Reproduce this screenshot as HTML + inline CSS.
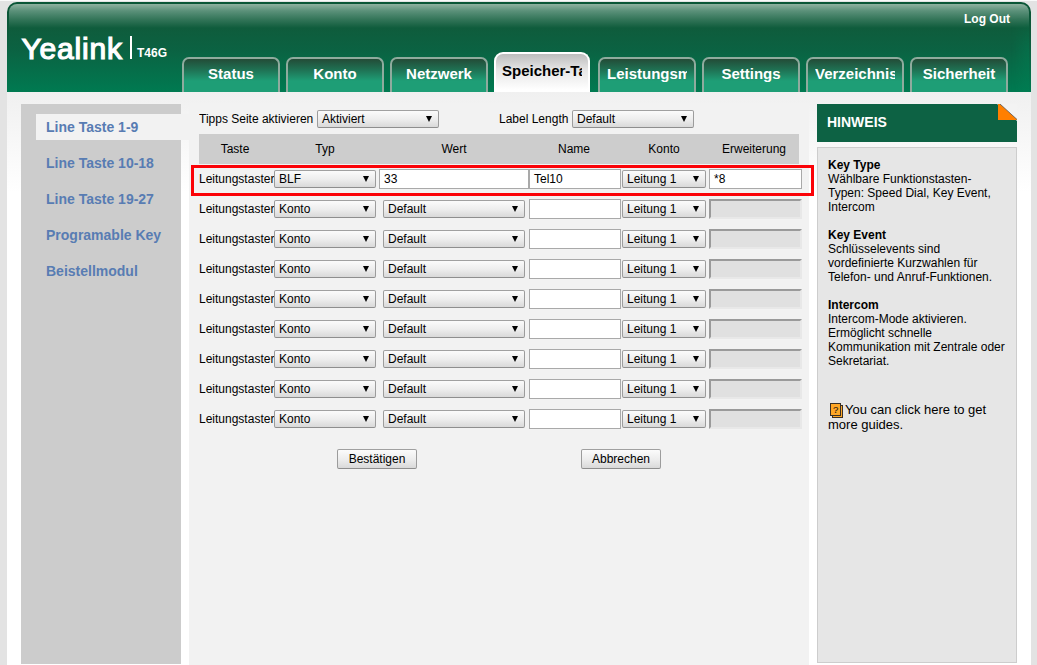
<!DOCTYPE html>
<html lang="de"><head><meta charset="utf-8"><title>Yealink T46G</title>
<style>
html,body{margin:0;padding:0}
body{width:1037px;height:665px;overflow:hidden;background:#e3e3e3;font-family:"Liberation Sans",Arial,sans-serif;font-size:12px;color:#000;position:relative}
div,span,i{box-sizing:border-box}
.abs,.tab,.lbl,.sel,.inp,.dis,.btn,.th,.side a,.hl{position:absolute}
#topline{left:0;top:0;width:1037px;height:1px;background:#fafafa}
#wrap{left:7px;top:92px;width:1024px;height:573px;background:linear-gradient(to bottom,#f0f0f0 0,#ffffff 100px)}
#hdr{left:7px;top:2px;width:1024px;height:90px;border-radius:10px 10px 0 0;background:linear-gradient(to bottom,#0a5536 0,#0c593a 29px,#0b6242 47px,#007a51 90px)}
#hdr2{left:9px;top:4px;width:1020px;height:88px;border-radius:8px 8px 0 0;background:linear-gradient(to bottom,#8fb1a0 0,#5a9079 7px,#35765a 15px,#0f5c3c 24px,#0b6242 45px,#007a51 88px)}
#hdr3{left:1011px;top:18px;width:18px;height:74px;background:linear-gradient(to right,rgba(0,128,84,0),rgba(0,128,84,0.4));-webkit-mask-image:linear-gradient(to bottom,transparent 0,#000 30px);mask-image:linear-gradient(to bottom,transparent 0,#000 30px)}
#logo{left:21.5px;top:30.5px;font-size:30px;line-height:36px;color:#fff;letter-spacing:0.8px;-webkit-text-stroke:1.2px #fff}
#bar{left:130px;top:36px;width:2px;height:23px;background:#fff}
#model{left:137px;top:45px;font-size:12px;line-height:16px;font-weight:bold;color:#fff}
#logout{left:964px;top:12px;font-size:12px;line-height:14px;font-weight:bold;color:#fff}
.tab{top:57px;width:98px;height:35px;border:2px solid #8fab9e;border-bottom:none;border-radius:7px 7px 0 0;background:linear-gradient(to bottom,#234b37 0,#1f6e51 10px,#1e9e76 22px);color:#fff;font-size:15px;font-weight:bold;padding:0 7px}
.tab span{display:block;width:80px;overflow:hidden;white-space:nowrap;text-align:center;line-height:17px;margin-top:6px}
.tab.act{top:52px;width:96px;height:40px;border:2px solid #fff;border-bottom:none;border-radius:9px 9px 0 0;background:linear-gradient(to bottom,#bdbdbd 0,#e6e6e6 16px,#ffffff 36px);color:#000;padding:0 6px}
.tab.act span{margin-top:8px}
#side{left:21px;top:104px;width:160px;height:560px;background:#cccccc}
#sideact{left:36px;top:114px;width:153px;height:26px;background:#f2f2f2}
.side a{left:46px;font-size:14px;line-height:18px;font-weight:bold;color:#587cb3;white-space:nowrap;text-decoration:none}
#main{left:189px;top:104px;width:620px;height:561px;background:#f2f2f2}
#thead{left:199px;top:134px;width:600px;height:30px;background:#cdcdcd}
.th{top:140px;width:100px;text-align:center;line-height:18px}
.hl{left:191px;top:165px;width:623px;height:31px;border:3px solid #fb0207}
.lbl{left:199px;width:75px;overflow:hidden;white-space:nowrap;line-height:18px;height:18px}
.sel{height:18px;line-height:16px;border:1px solid;border-color:#a0a0a0 #9c9c9c #8e8e8e #9c9c9c;border-radius:2px;background:linear-gradient(to bottom,#fbfbfb,#ececec 55%,#d9d9d9);padding-left:4px;white-space:nowrap;overflow:hidden}
.sel i{position:absolute;right:6px;top:5px;width:0;height:0;border-left:3px solid transparent;border-right:3px solid transparent;border-top:6px solid #000}
.inp{height:20px;border:1px solid #a9a9a9;background:#fff;line-height:18px;padding-left:4px;white-space:nowrap;overflow:hidden}
.dis{height:20px;border:2px solid;border-color:#9a9a9a #e8e8e8 #e8e8e8 #9a9a9a;background:#e0e0e0}
.btn{top:449px;width:80px;height:20px;border:1px solid;border-color:#a0a0a0 #9c9c9c #8e8e8e #9c9c9c;border-radius:2px;background:linear-gradient(to bottom,#fbfbfb,#ececec 55%,#d9d9d9);text-align:center;line-height:18px}
#hinthead{left:817px;top:104px;width:200px;height:38px;background:#0d6244;color:#fff;font-size:14px;font-weight:bold;line-height:36px;padding-left:10px}
#hintbody{left:817px;top:147px;width:200px;height:516px;background:#e6e6e6;border:1px solid #cdcdcd}
#hinttxt{left:828px;top:158px;width:185px;line-height:14px}
#hinttxt b{display:block}
#guide{left:828px;top:402px;width:185px;font-size:13px;line-height:15px}
</style></head><body>
<div class="abs" id="topline"></div>
<div class="abs" id="wrap"></div>
<div class="abs" id="hdr"></div>
<div class="abs" id="hdr2"></div>
<div class="abs" id="hdr3"></div>
<div class="abs" id="logo">Yealink</div>
<div class="abs" id="bar"></div>
<div class="abs" id="model">T46G</div>
<div class="abs" id="logout">Log Out</div>
<div class="tab" style="left:182px"><span>Status</span></div>
<div class="tab" style="left:286px"><span>Konto</span></div>
<div class="tab" style="left:390px"><span>Netzwerk</span></div>
<div class="tab act" style="left:494px"><span>Speicher-Taste</span></div>
<div class="tab" style="left:598px"><span>Leistungsmerkmale</span></div>
<div class="tab" style="left:702px"><span>Settings</span></div>
<div class="tab" style="left:806px"><span>Verzeichnis</span></div>
<div class="tab" style="left:910px"><span>Sicherheit</span></div>

<div class="abs" id="side"></div>
<div class="abs" id="main"></div>
<div class="abs" id="sideact"></div>
<div class="side">
<a style="top:118px">Line Taste 1-9</a>
<a style="top:154px">Line Taste 10-18</a>
<a style="top:190px">Line Taste 19-27</a>
<a style="top:226px">Programable Key</a>
<a style="top:262px">Beistellmodul</a>
</div>
<div class="lbl" style="top:110px;width:120px">Tipps Seite aktivieren</div>
<div class="sel" style="left:317px;top:110px;width:122px">Aktiviert<i></i></div>
<div class="lbl" style="left:499px;top:110px;width:72px">Label Length</div>
<div class="sel" style="left:572px;top:110px;width:122px">Default<i></i></div>
<div class="abs" id="thead"></div>
<div class="th" style="left:185px">Taste</div>
<div class="th" style="left:275px">Typ</div>
<div class="th" style="left:404px">Wert</div>
<div class="th" style="left:524px">Name</div>
<div class="th" style="left:614px">Konto</div>
<div class="th" style="left:704px">Erweiterung</div>
<div class="lbl" style="top:170px">Leitungstaster</div>
<div class="sel" style="left:274px;top:170px;width:102px">BLF<i></i></div>
<div class="inp" style="left:379px;top:169px;width:150px">33</div>
<div class="inp" style="left:529px;top:169px;width:92px">Tel10</div>
<div class="sel" style="left:622px;top:170px;width:84px">Leitung 1<i></i></div>
<div class="inp" style="left:709px;top:169px;width:93px">*8</div>
<div class="lbl" style="top:200px">Leitungstaster</div>
<div class="sel" style="left:274px;top:200px;width:102px">Konto<i></i></div>
<div class="sel" style="left:383px;top:200px;width:142px">Default<i></i></div>
<div class="inp" style="left:529px;top:199px;width:92px"></div>
<div class="sel" style="left:622px;top:200px;width:84px">Leitung 1<i></i></div>
<div class="dis" style="left:709px;top:199px;width:93px"></div>
<div class="lbl" style="top:230px">Leitungstaster</div>
<div class="sel" style="left:274px;top:230px;width:102px">Konto<i></i></div>
<div class="sel" style="left:383px;top:230px;width:142px">Default<i></i></div>
<div class="inp" style="left:529px;top:229px;width:92px"></div>
<div class="sel" style="left:622px;top:230px;width:84px">Leitung 1<i></i></div>
<div class="dis" style="left:709px;top:229px;width:93px"></div>
<div class="lbl" style="top:260px">Leitungstaster</div>
<div class="sel" style="left:274px;top:260px;width:102px">Konto<i></i></div>
<div class="sel" style="left:383px;top:260px;width:142px">Default<i></i></div>
<div class="inp" style="left:529px;top:259px;width:92px"></div>
<div class="sel" style="left:622px;top:260px;width:84px">Leitung 1<i></i></div>
<div class="dis" style="left:709px;top:259px;width:93px"></div>
<div class="lbl" style="top:290px">Leitungstaster</div>
<div class="sel" style="left:274px;top:290px;width:102px">Konto<i></i></div>
<div class="sel" style="left:383px;top:290px;width:142px">Default<i></i></div>
<div class="inp" style="left:529px;top:289px;width:92px"></div>
<div class="sel" style="left:622px;top:290px;width:84px">Leitung 1<i></i></div>
<div class="dis" style="left:709px;top:289px;width:93px"></div>
<div class="lbl" style="top:320px">Leitungstaster</div>
<div class="sel" style="left:274px;top:320px;width:102px">Konto<i></i></div>
<div class="sel" style="left:383px;top:320px;width:142px">Default<i></i></div>
<div class="inp" style="left:529px;top:319px;width:92px"></div>
<div class="sel" style="left:622px;top:320px;width:84px">Leitung 1<i></i></div>
<div class="dis" style="left:709px;top:319px;width:93px"></div>
<div class="lbl" style="top:350px">Leitungstaster</div>
<div class="sel" style="left:274px;top:350px;width:102px">Konto<i></i></div>
<div class="sel" style="left:383px;top:350px;width:142px">Default<i></i></div>
<div class="inp" style="left:529px;top:349px;width:92px"></div>
<div class="sel" style="left:622px;top:350px;width:84px">Leitung 1<i></i></div>
<div class="dis" style="left:709px;top:349px;width:93px"></div>
<div class="lbl" style="top:380px">Leitungstaster</div>
<div class="sel" style="left:274px;top:380px;width:102px">Konto<i></i></div>
<div class="sel" style="left:383px;top:380px;width:142px">Default<i></i></div>
<div class="inp" style="left:529px;top:379px;width:92px"></div>
<div class="sel" style="left:622px;top:380px;width:84px">Leitung 1<i></i></div>
<div class="dis" style="left:709px;top:379px;width:93px"></div>
<div class="lbl" style="top:410px">Leitungstaster</div>
<div class="sel" style="left:274px;top:410px;width:102px">Konto<i></i></div>
<div class="sel" style="left:383px;top:410px;width:142px">Default<i></i></div>
<div class="inp" style="left:529px;top:409px;width:92px"></div>
<div class="sel" style="left:622px;top:410px;width:84px">Leitung 1<i></i></div>
<div class="dis" style="left:709px;top:409px;width:93px"></div>
<div class="hl"></div>
<div class="btn" style="left:337px">Bestätigen</div>
<div class="btn" style="left:581px">Abbrechen</div>
<div class="abs" id="hinthead">HINWEIS
<svg style="position:absolute;right:0;top:0" width="20" height="17" viewBox="0 0 20 17"><polygon points="0,0 20,0 20,17" fill="#f3f3f3"/><polygon points="1,0 3,0 20,15.5 20,16 1,16" fill="#ff7f00"/><line x1="3" y1="0" x2="20" y2="15.5" stroke="#555" stroke-width="0.8"/></svg>
</div>
<div class="abs" id="hintbody"></div>
<div class="abs" id="hinttxt"><b>Key Type</b>Wählbare Funktionstasten-<br>Typen: Speed Dial, Key Event,<br>Intercom<br><br><b>Key Event</b>Schlüsselevents sind<br>vordefinierte Kurzwahlen für<br>Telefon- und Anruf-Funktionen.<br><br><b>Intercom</b>Intercom-Mode aktivieren.<br>Ermöglicht schnelle<br>Kommunikation mit Zentrale oder<br>Sekretariat.</div>
<div class="abs" id="guide"><svg width="15" height="15" viewBox="0 0 15 15" style="vertical-align:-3px;margin-left:1px;margin-right:1px;position:relative;top:1px"><rect x="3.5" y="2.5" width="10" height="12" fill="#ffa726" stroke="#3a3026" stroke-width="1"/><rect x="1.5" y="0.5" width="10" height="12" fill="#ffa726" stroke="#3a3026" stroke-width="1"/><text x="6.6" y="10.2" font-size="9.5" text-anchor="middle" fill="#2a2018" stroke="#2a2018" stroke-width="0.12" font-family="Liberation Sans, sans-serif">?</text></svg>You can click here to get more guides.</div>
</body></html>
